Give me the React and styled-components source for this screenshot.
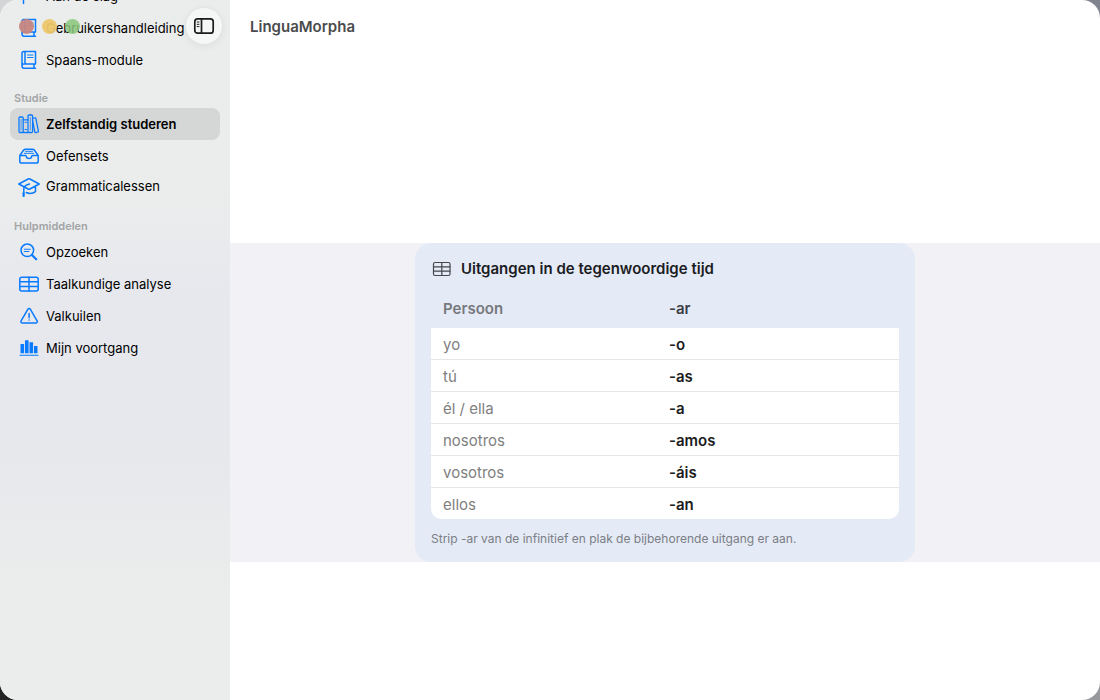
import styled, {createGlobalStyle} from 'styled-components'

const GlobalStyle = createGlobalStyle`
  * {
    box-sizing: border-box;
  }
  body {
    margin: 0;
    font-family: Inter, "Liberation Sans", sans-serif;
    background:
      linear-gradient(to right, #d4d5d7 50%, #80848e 50%) top / 100% 50vh no-repeat,
      linear-gradient(to right, #232323 50%, #96989b 50%);
  }
`

const Window = styled.div`
  display: flex;
  min-height: 100vh;
  border-radius: 18px;
  overflow: hidden;
  background: #fff;
`

const Sidebar = styled.aside`
  position: relative;
  flex: 0 0 230px;
  height: 100vh;
  overflow: hidden;
  background: linear-gradient(#ebedec 0, #ebedec 180px, #e7e8ee 300px, #e7e8ec 450px, #ebedec 600px);
`

const TitleControls = styled.div`
  position: absolute;
  top: 7px;
  left: 19px;
  right: 7px;
  display: flex;
  align-items: center;
  gap: 8px;
`

const Light = styled.button`
  width: 15px;
  height: 15px;
  padding: 0;
  border: 0;
  border-radius: 50%;
  background: ${props => props.$color};
`

const ToggleButton = styled.button`
  display: flex;
  align-items: center;
  justify-content: center;
  width: 38px;
  height: 38px;
  margin-left: auto;
  padding: 0;
  border: 1px solid #e2e3e3;
  border-radius: 50%;
  color: #1c1c1c;
  background: #f5f6f6;
  box-shadow: 0 2px 8px rgba(0, 0, 0, 0.06);
`

/* the list sits slightly scrolled under the window controls */
const NavScroll = styled.nav`
  margin-top: -20px;
  padding: 0 10px;
`

const SectionTitle = styled.h2`
  height: 32px;
  margin: 0;
  padding: 12px 4px 0;
  font-size: 11px;
  line-height: 20px;
  font-weight: 600;
  color: #a2a4a6;
`

const NavList = styled.ul`
  margin: 0;
  padding: 0;
  list-style: none;
`

const NavLink = styled.a`
  display: flex;
  align-items: center;
  gap: 6px;
  height: ${props => props.$short ? '28px' : '32px'};
  margin-bottom: ${props => props.$short ? '4px' : '0'};
  padding: 0 8px;
  border-radius: 8px;
  font-size: 13px;
  font-weight: ${props => props.$active ? 600 : 400};
  color: #000;
  background: ${props => props.$active ? '#d5d7d6' : 'transparent'};
  text-decoration: none;
  white-space: nowrap;
`

const Icon = styled.svg`
  flex: none;
  display: block;
  overflow: visible;
  width: 22px;
  height: 22px;
  color: ${props => props.$color || '#0a7aff'};
  fill: none;
  stroke: currentColor;
  stroke-width: ${props => props.$line || 1.5};
  stroke-linecap: round;
  stroke-linejoin: round;
`

const Main = styled.main`
  flex: 1;
  min-width: 0;
  display: flex;
  flex-direction: column;
`

const Toolbar = styled.header`
  display: flex;
  align-items: center;
  height: 52px;
  padding: 0 20px;
`

const AppTitle = styled.h1`
  margin: 0;
  font-size: 15px;
  font-weight: 600;
  color: #4a4b4d;
`

const Content = styled.div`
  flex: 1;
  display: flex;
  flex-direction: column;
  justify-content: center;
  padding-top: 53px;
`

const Band = styled.div`
  display: flex;
  justify-content: center;
  background: #f2f1f6;
`

const Card = styled.section`
  width: 100%;
  max-width: 500px;
  padding: 16px 16px 15px;
  border-radius: 16px;
  background: #e4eaf6;
`

const CardTitle = styled.h2`
  display: flex;
  align-items: center;
  gap: 8px;
  height: 20px;
  margin: 0 0 11px;
  font-size: 15px;
  line-height: 20px;
  font-weight: 600;
  color: #1b1c1f;
`

const TableFrame = styled.div`
  border-radius: 10px;
  overflow: hidden;
`

const Table = styled.table`
  width: 100%;
  border-collapse: separate;
  border-spacing: 0;
  table-layout: fixed;
  font-size: 15px;
  line-height: 20px;
  text-align: left;
`

const HeadCell = styled.th`
  width: ${props => props.$first ? '226px' : 'auto'};
  height: 38px;
  padding: 0 12px;
  font-weight: 600;
  color: ${props => props.$first ? '#77797d' : '#3b3d44'};
`

const Cell = styled.td`
  height: 32px;
  padding: 2px 12px 0;
  font-weight: ${props => props.$strong ? 600 : 400};
  color: ${props => props.$strong ? '#1b1b1d' : '#808080'};
  background: #fff;
  border-bottom: 1px solid #e6e6e6;

  tr:last-child > & {
    height: 31px;
    border-bottom: 0;
  }
`

const Note = styled.p`
  margin: 12px 0 0;
  font-size: 12px;
  line-height: 16px;
  color: #7b7e84;
`

function BookIcon() {
  return (
    <Icon viewBox="0 0 22 22">
      <path d="M4 17V4.200c0-1 .7-1.700 1.700-1.700H17.500v12.500H6c-1.200 0-2 .8-2 2s.8 2.200 2 2.200h11.500M16 15v4.200M7 2.500V15" />
      <path strokeWidth="1" d="M9.500 6h5.500M9.500 8.500h5.500" />
    </Icon>
  )
}

function SignpostIcon() {
  return (
    <Icon viewBox="0 0 22 22">
      <path d="M5.500 3v15.500M5.500 4h12l-2 3.500 2 3.500h-12" />
    </Icon>
  )
}

function BooksIcon() {
  return (
    <Icon viewBox="0 0 22 22" $line={1.3}>
      <rect x="1" y="4" width="4.200" height="15.500" rx="1" />
      <path d="M5.200 6.800h4.800M5.200 19.500h4.800" />
      <path strokeWidth="1" d="M7 9.300h1.500M7 16.500h1.500" />
      <rect x="10" y="2" width="4.600" height="17.500" rx="1" />
      <path d="M14.600 5.300l2.300-.4c.5-.1.900.2 1 .7l2.500 12.600c.1.500-.2.900-.7 1l-1.900.3c-.5.100-.9-.2-1-.7L14.600 8" />
      <path strokeWidth="0.700" d="M3.100 6.500v10.500M12.300 4.500v12.500" />
    </Icon>
  )
}

function TrayIcon() {
  return (
    <Icon viewBox="0 0 22 22">
      <path d="M1.800 10.500l3.700-5.200c.5-.7 1.100-1.100 2-1.100h7c.9 0 1.500.4 2 1.100l3.700 5.200v5.700c0 1.200-.7 1.900-1.900 1.900H3.700c-1.200 0-1.900-.7-1.900-1.900v-5.700h5.700c.5 0 .8.300.8.800 0 1.400 1.200 2.300 2.700 2.300s2.700-.9 2.700-2.300c0-.5.300-.8.800-.8h5.700" />
      <path strokeWidth="1" d="M7.500 6.300h7M6.300 8.300h9.400" />
    </Icon>
  )
}

function CapIcon() {
  return (
    <Icon viewBox="0 0 22 22">
      <path d="M.8 9l9.300-5c.6-.3 1.200-.3 1.800 0l9.300 5-9.300 5c-.6.300-1.200.3-1.800 0L.8 9zM17.500 11.300v5.300c-1.600 1.300-3.500 1.800-5.500 1.800-1.400 0-2.700-.3-3.800-.9" />
      <path d="M11.500 9c-2.500.8-5.700 1.800-5.700 4.500v7.500" />
      <path strokeWidth="2" d="M5.500 18v3" />
    </Icon>
  )
}

function LookupIcon() {
  return (
    <Icon viewBox="0 0 22 22">
      <circle cx="9.300" cy="9.300" r="6.300" />
      <path strokeWidth="2.200" d="M14.200 14.200l4 4" />
      <path strokeWidth="1.100" d="M6.300 8.200h6M6.300 10.500h4.500" />
    </Icon>
  )
}

function TableIcon() {
  return (
    <Icon viewBox="0 0 22 22">
      <rect x="1.800" y="4.200" width="18.400" height="13.800" rx="2" />
      <path d="M2 8.800h18M2 13.400h18M11 4.200V18" />
    </Icon>
  )
}

function CardTableIcon() {
  return (
    <Icon viewBox="0 0 22 22" $color="#45474d" $line={1.2}>
      <rect x="2.500" y="4.500" width="16.500" height="13" rx="1.500" />
      <path d="M2.500 8.800H19M2.500 13.200H19M10.800 4.500v13" />
    </Icon>
  )
}

function WarningIcon() {
  return (
    <Icon viewBox="0 0 22 22">
      <path d="M9.800 4.300c.6-1 2-1 2.600 0l6.700 11.600c.6 1-.1 2.200-1.300 2.200H4.400c-1.200 0-1.900-1.200-1.300-2.200L9.800 4.300zM11.100 8.500v4.200M11.100 15v.1" />
    </Icon>
  )
}

function BarsIcon() {
  return (
    <Icon viewBox="0 0 22 22">
      <path fill="currentColor" stroke="none" d="M2.500 7h3.600v9.300H2.500zM7 3.200h3.600v13.100H7zM11.500 5.300h3.600v11h-3.600zM16 9h3.500v7.300H16z" />
      <path strokeWidth="1.100" d="M2 18.200h18" />
    </Icon>
  )
}

function SidebarIcon() {
  return (
    <Icon viewBox="0 0 22 22" $color="#1c1c1c" $line={1.700}>
      <rect x="1.800" y="3.800" width="18.400" height="14.400" rx="2.800" />
      <path d="M8.500 4v14" />
      <path strokeWidth="1" d="M4.200 7h1.800M4.200 9.300h1.800M4.200 11.600h1.800" />
    </Icon>
  )
}

const sections = [
  {
    items: [
      {label: 'Aan de slag', icon: SignpostIcon},
      {label: 'Gebruikershandleiding', icon: BookIcon},
      {label: 'Spaans-module', icon: BookIcon},
    ],
  },
  {
    title: 'Studie',
    items: [
      {label: 'Zelfstandig studeren', icon: BooksIcon, active: true},
      {label: 'Oefensets', icon: TrayIcon},
      {label: 'Grammaticalessen', icon: CapIcon, short: true},
    ],
  },
  {
    title: 'Hulpmiddelen',
    items: [
      {label: 'Opzoeken', icon: LookupIcon},
      {label: 'Taalkundige analyse', icon: TableIcon},
      {label: 'Valkuilen', icon: WarningIcon},
      {label: 'Mijn voortgang', icon: BarsIcon},
    ],
  },
]

const endings = [
  ['yo', '-o'],
  ['tú', '-as'],
  ['él / ella', '-a'],
  ['nosotros', '-amos'],
  ['vosotros', '-áis'],
  ['ellos', '-an'],
]

function NavSection({title, items}) {
  return (
    <>
      {title && <SectionTitle>{title}</SectionTitle>}
      <NavList>
        {items.map(({label, icon: ItemIcon, active, short}) => (
          <li key={label}>
            <NavLink href="#" $active={active} $short={short} aria-current={active ? 'page' : undefined}>
              <ItemIcon />
              {label}
            </NavLink>
          </li>
        ))}
      </NavList>
    </>
  )
}

function EndingsCard() {
  return (
    <Card>
      <CardTitle>
        <CardTableIcon />
        Uitgangen in de tegenwoordige tijd
      </CardTitle>
      <TableFrame>
        <Table>
          <thead>
            <tr>
              <HeadCell scope="col" $first>Persoon</HeadCell>
              <HeadCell scope="col">-ar</HeadCell>
            </tr>
          </thead>
          <tbody>
            {endings.map(([person, ending]) => (
              <tr key={person}>
                <Cell>{person}</Cell>
                <Cell $strong>{ending}</Cell>
              </tr>
            ))}
          </tbody>
        </Table>
      </TableFrame>
      <Note>Strip -ar van de infinitief en plak de bijbehorende uitgang er aan.</Note>
    </Card>
  )
}

export default function App() {
  return (
    <>
      <GlobalStyle />
      <Window>
        <Sidebar>
          <NavScroll>
            {sections.map((section, i) => <NavSection key={i} {...section} />)}
          </NavScroll>
          <TitleControls>
            <Light $color="rgba(198, 134, 128, 0.95)" aria-label="Sluit" />
            <Light $color="rgba(236, 199, 108, 0.95)" aria-label="Minimaliseer" />
            <Light $color="rgba(138, 198, 122, 0.85)" aria-label="Vergroot" />
            <ToggleButton aria-label="Navigatiekolom">
              <SidebarIcon />
            </ToggleButton>
          </TitleControls>
        </Sidebar>
        <Main>
          <Toolbar>
            <AppTitle>LinguaMorpha</AppTitle>
          </Toolbar>
          <Content>
            <Band>
              <EndingsCard />
            </Band>
          </Content>
        </Main>
      </Window>
    </>
  )
}
